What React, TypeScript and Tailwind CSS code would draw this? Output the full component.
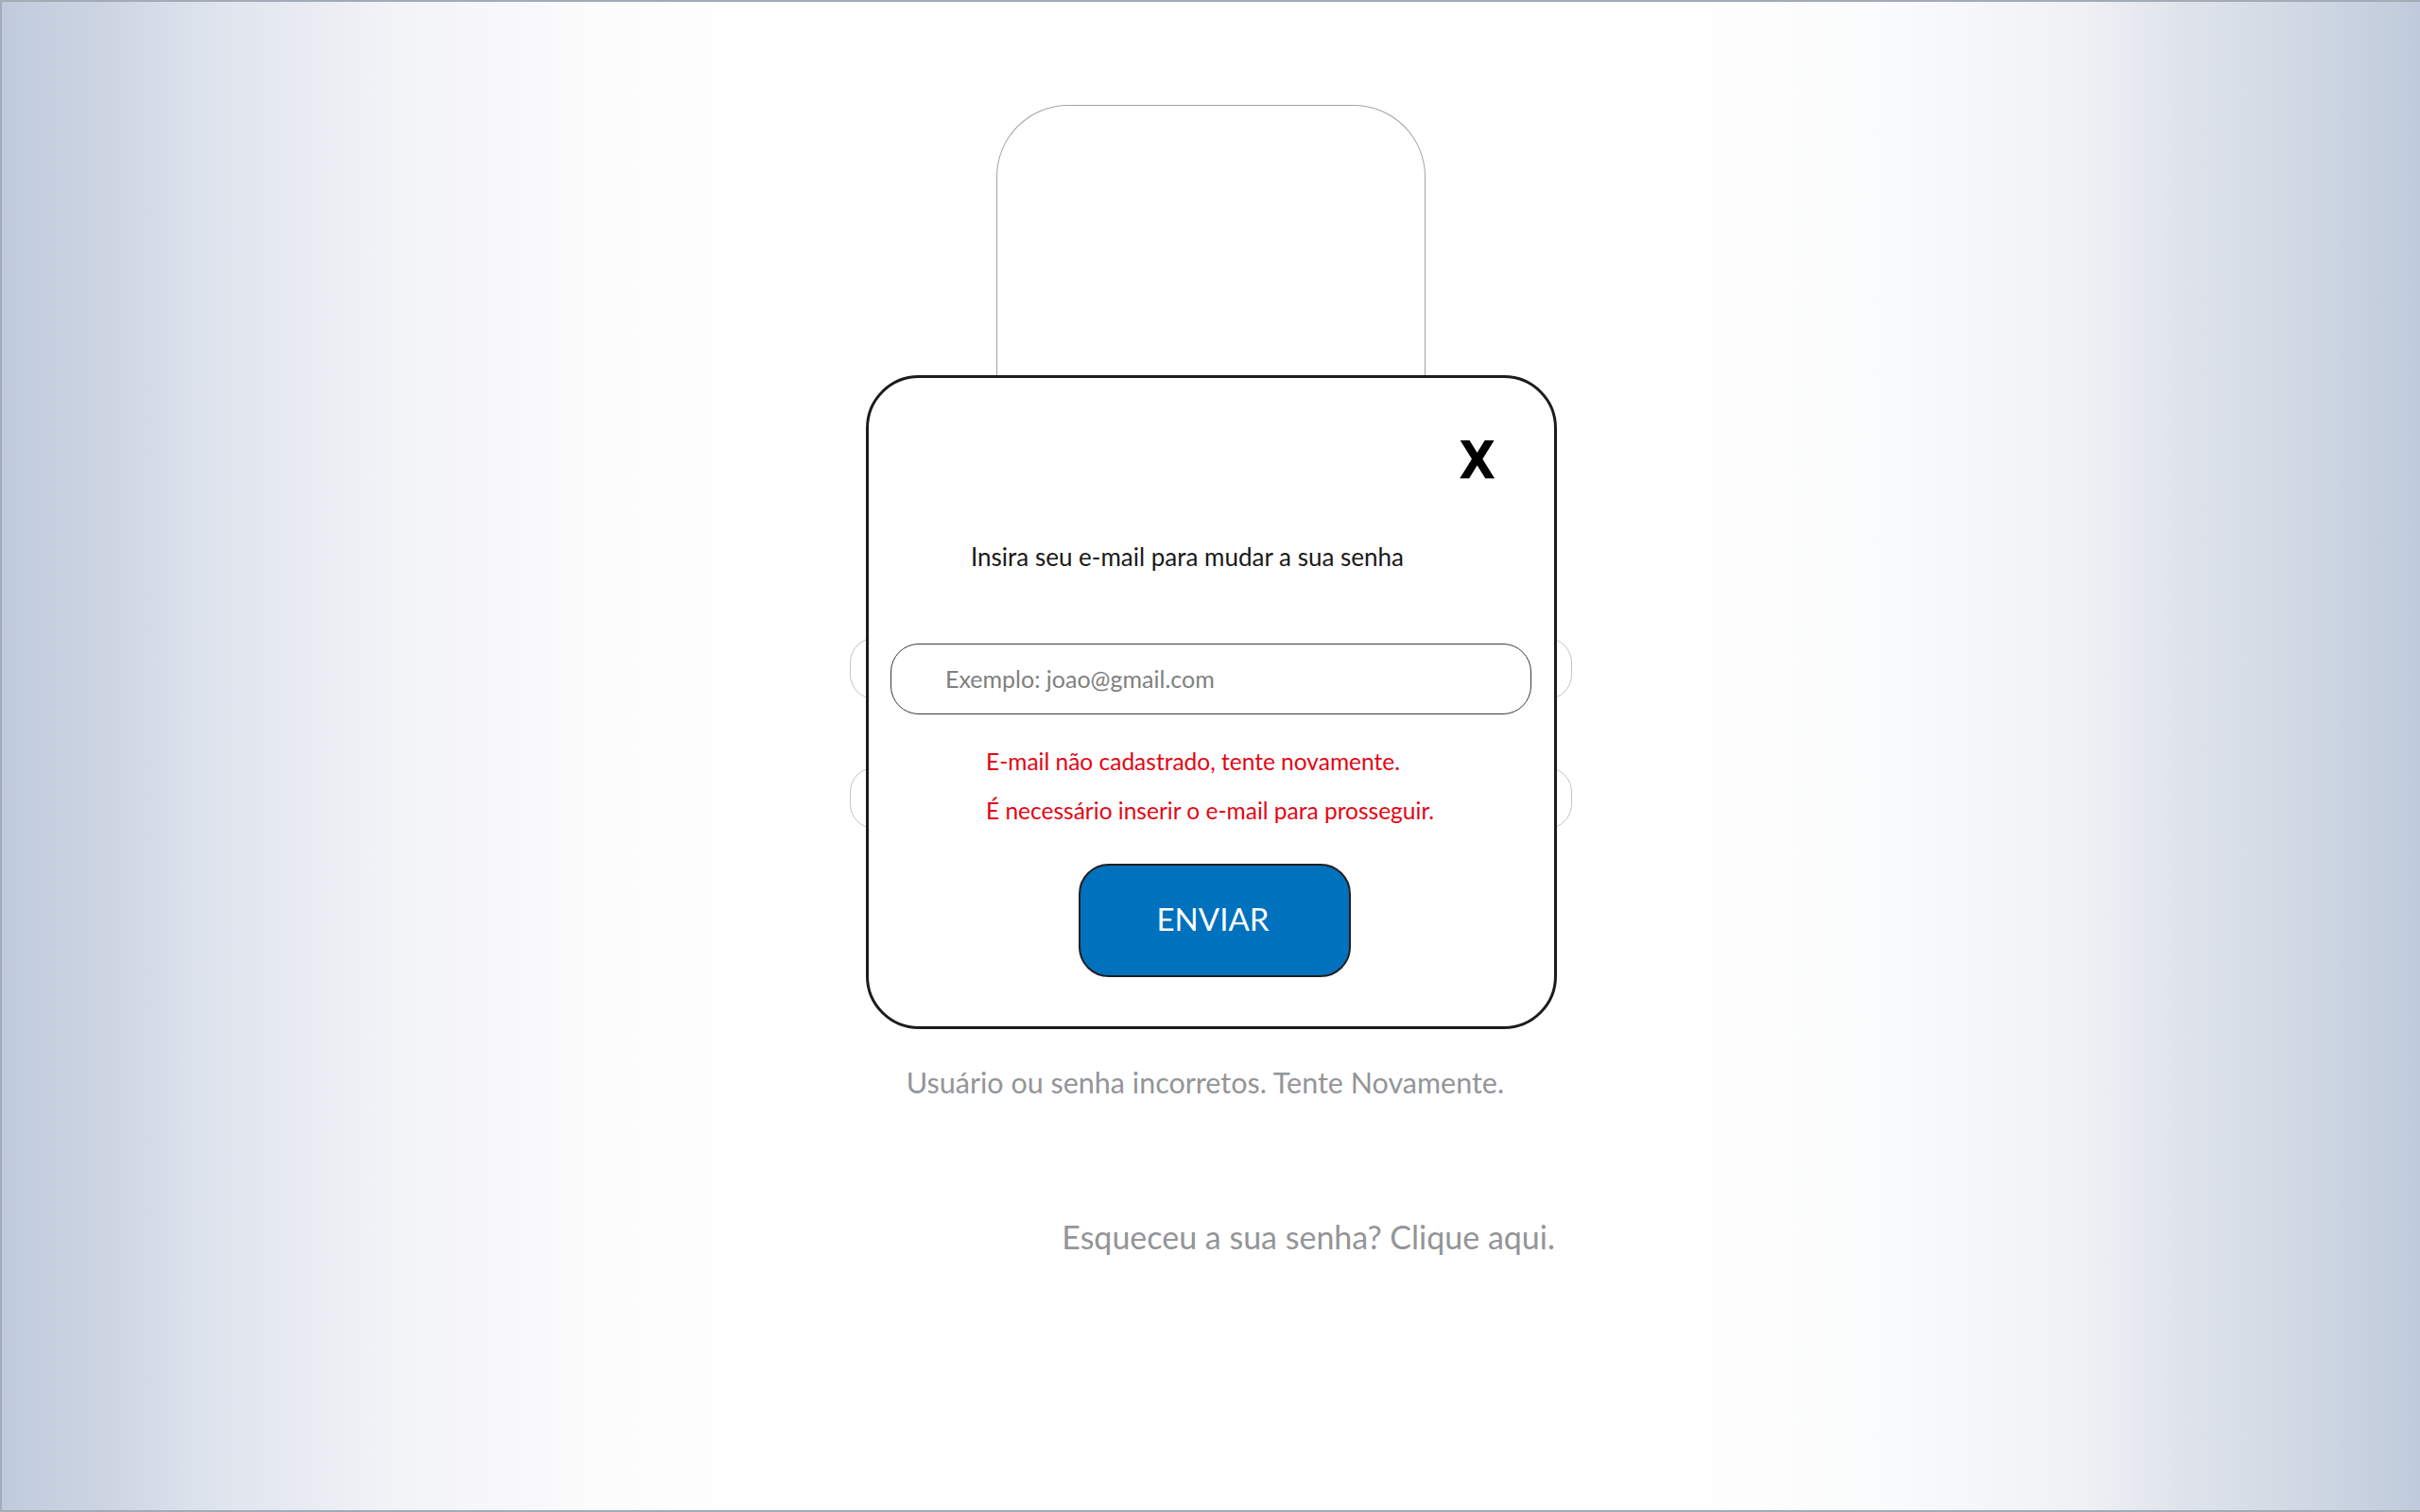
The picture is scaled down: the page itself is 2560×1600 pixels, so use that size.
export default function App() {
  return (
    <div className="relative h-[1600px] w-full overflow-hidden border-t-2 border-l-2 border-b-2 border-[#a3abb7] bg-[linear-gradient(90deg,#bfcbdd_0%,#ccd4e2_4%,#dce2ec_8%,#e7eaf2_12%,#f2f3f7_16%,#fcfcfd_25%,#ffffff_32%,#ffffff_68%,#fafbfc_78%,#f0f1f4_86%,#dfe4ec_90%,#d4dbe5_94%,#bfcbdc_100%)] font-['Lato',sans-serif]">
      {/* Login page behind the dialog */}
      <div className="flex flex-col items-center">
        <div className="mt-[109px] h-[300px] w-[454px] rounded-t-[76px] border border-b-0 border-[#a3a3a3]" />
        <div className="mt-[264px] h-[65px] w-[764px] rounded-[26px] border border-[#c4c4c4]" />
        <div className="mt-[72px] h-[65px] w-[764px] rounded-[26px] border border-[#c4c4c4]" />
        <p className="mt-[248px] -ml-[12px] text-[30.5px] leading-[40px] text-[#939598]">
          Usuário ou senha incorretos. Tente Novamente.
        </p>
        <div className="mt-[124px] flex w-[764px] justify-end pr-[18px]">
          <span className="text-[34px] leading-[40px] text-[#939598]">Esqueceu a sua senha? Clique aqui.</span>
        </div>
      </div>

      {/* Dialog */}
      <div className="absolute left-[914px] top-[395px] flex h-[692px] w-[731px] flex-col rounded-[56px] border-[3px] border-[#1f1b1c] bg-white">
        <div className="mt-[59px] flex justify-end pr-[62px]">
          <button className="font-['DejaVu_Sans_Condensed','DejaVu_Sans',sans-serif] text-[56px] font-bold leading-none text-black">
            X
          </button>
        </div>
        <p className="mt-[61px] pl-[108px] text-[26px] leading-[26px] text-[#1a1a1a]">
          Insira seu e-mail para mudar a sua senha
        </p>
        <div className="ml-[23px] mt-[79px] flex h-[75px] w-[678px] items-center rounded-[30px] border-[1.5px] border-[#3a3a3a] pl-[57px]">
          <input
            placeholder="Exemplo: joao@gmail.com"
            className="w-full bg-transparent text-[25px] text-[#1a1a1a] outline-none placeholder:text-[#808080]"
          />
        </div>
        <p className="mt-[37px] pl-[124px] text-[24.5px] leading-[26px] text-[#e30613]">
          E-mail não cadastrado, tente novamente.
        </p>
        <p className="mt-[26px] pl-[124px] text-[24.5px] leading-[26px] text-[#e30613]">
          É necessário inserir o e-mail para prosseguir.
        </p>
        <button className="ml-[222px] mt-[43px] flex h-[120px] w-[288px] items-center justify-center rounded-[32px] border-2 border-[#231f20] bg-[#0071bc] pr-[4px] pb-[3px] text-[33px] text-white">
          ENVIAR
        </button>
      </div>
    </div>
  );
}
